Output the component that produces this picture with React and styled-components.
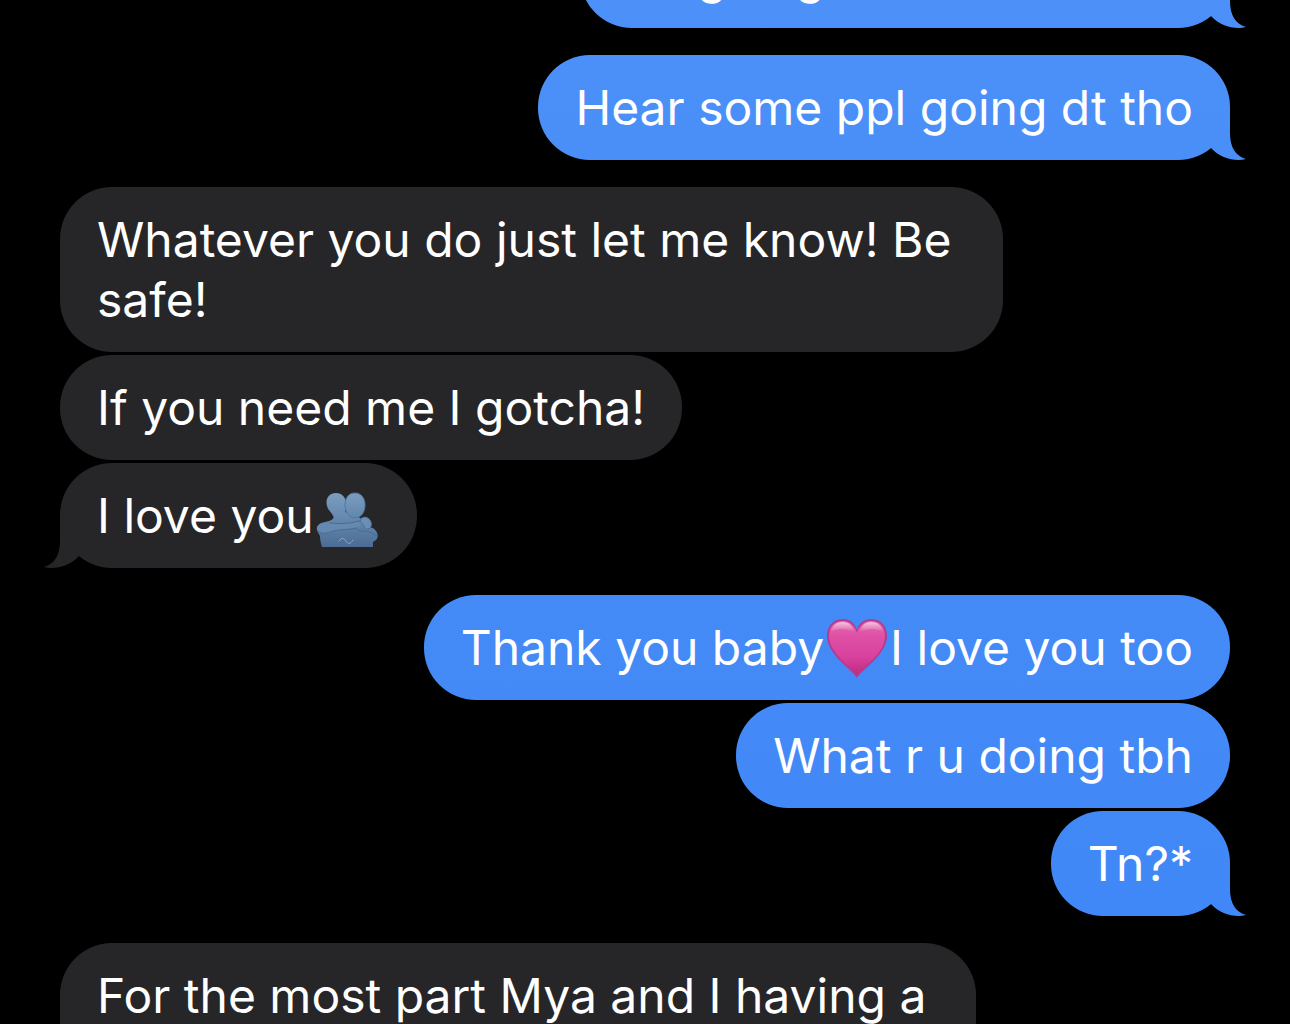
import React from "react";
import styled, { createGlobalStyle, css } from "styled-components";

const GlobalStyle = createGlobalStyle`
  *, *::before, *::after { box-sizing: border-box; }
  body {
    margin: 0;
    background: #000;
    overflow: hidden;
  }
`;

const Conversation = styled.main`
  display: flex;
  flex-direction: column;
  gap: 27px;
  height: 100vh;
  overflow: hidden;
  padding: 0 60px;
  background: #000;
  color: #fff;
  font-family: Inter, "Liberation Sans", sans-serif;
  font-size: 48px;
  font-weight: 400;
  line-height: 60px;
`;

const Group = styled.section`
  display: flex;
  flex: none;
  flex-direction: column;
  align-items: ${(p) => (p.$sent ? "flex-end" : "flex-start")};
  gap: 3px;
  margin-top: ${(p) => (p.$scrolled ? "-77px" : "0")};
`;

const sentFill = css`
  background: linear-gradient(#4c90f8, #3f87f7) fixed;
`;

const receivedFill = css`
  background: #262628;
`;

const Bubble = styled.p`
  position: relative;
  flex: none;
  margin: 0;
  max-width: min(100%, ${(p) => (p.$narrow ? "916px" : "943px")});
  padding: 23px 37px 22px;
  border-radius: 52px;
  ${(p) => (p.$sent ? sentFill : receivedFill)}
`;

const Tail = styled.span`
  position: absolute;
  bottom: 0;
  width: 50px;
  height: 54px;
  clip-path: path("M34 0V27C34 42 40 50 50 53C39 56 24 52 15 42L6 30Z");
  ${(p) =>
    p.$sent
      ? css`
          right: -16px;
          ${sentFill}
        `
      : css`
          left: -16px;
          transform: scaleX(-1);
          ${receivedFill}
        `}
`;

const Emoji = styled.svg`
  display: inline-block;
  width: 62px;
  height: 60px;
  margin: 0 2px;
  overflow: visible;
  vertical-align: top;
`;

function Heart() {
  return (
    <Emoji viewBox="0 0 62 60" role="img" aria-label="pink heart">
      <defs>
        <linearGradient id="heartFill" x1="0" y1="0" x2="0" y2="1">
          <stop offset="0" stopColor="#e46cb0" />
          <stop offset=".28" stopColor="#de50a5" />
          <stop offset=".65" stopColor="#d9429f" />
          <stop offset="1" stopColor="#c02a80" />
        </linearGradient>
        <linearGradient id="heartShine" x1="0" y1="0" x2="0" y2="1">
          <stop offset="0" stopColor="#fff" stopOpacity=".6" />
          <stop offset="1" stopColor="#fff" stopOpacity="0" />
        </linearGradient>
      </defs>
      <path d="M31 60C27 52 1 37 1 18C1 7 8 1 17 1C24 1 29 5 31 12C33 5 38 1 45 1C54 1 61 7 61 18C61 37 35 52 31 60Z" fill="#b53a90" />
      <path d="M31 57C27 50 3 36 3 18C3 8 9 3 17 3C24 3 29 8 31 15C33 8 38 3 45 3C53 3 59 8 59 18C59 36 35 50 31 57Z" fill="url(#heartFill)" />
      <path d="M5 14C6 7 11 4 17 4C23 4 27 8 28 14C20 10 12 10 5 14Z" fill="url(#heartShine)" />
      <path d="M34 14C35 8 39 4 45 4C51 4 56 7 57 14C50 10 42 10 34 14Z" fill="url(#heartShine)" />
    </Emoji>
  );
}

function Hug() {
  return (
    <Emoji viewBox="0 0 62 60" role="img" aria-label="people hugging">
      <defs>
        <linearGradient id="hugHead" x1="0" y1="0" x2="0" y2="1">
          <stop offset="0" stopColor="#7c9dbf" />
          <stop offset="1" stopColor="#6186ae" />
        </linearGradient>
        <linearGradient id="hugBody" x1="0" y1="0" x2="0" y2="1">
          <stop offset="0" stopColor="#6c90b6" />
          <stop offset="1" stopColor="#4c6b92" />
        </linearGradient>
      </defs>
      <path d="M18 28C19 33 15 35 9 36C3 37 0 40 1 44C2 47 3 48 4 50C4 54 5 58 6 61H57V56C62 54 63 49 60 45C58 42 55 41 53 41L48 34L40 30L29 26Z" fill="url(#hugBody)" />
      <path d="M20 7C13 7 9 13 11 20C12 25 18 28 18 33C20 37 27 36 29 32L30 18C30 11 26 7 20 7Z" fill="url(#hugHead)" />
      <path d="M39 7C32 7 29 13 29 19C29 26 33 32 39 32C45 32 49 26 49 19C49 12 45 7 39 7Z" fill="url(#hugHead)" stroke="#547aa3" strokeWidth="1" />
      <path d="M1 42C2 37 8 37 14 37C23 38 31 38 42 35C44 35 46 36 46 37C45 39 42 40 40 42C29 44 20 44 11 47C5 48 1 46 1 42Z" fill="#6689b0" />
      <path d="M44 35C44 31 51 29 54 34C57 38 55 43 51 43C48 43 47 40 46 37Z" fill="#6c8fb5" />
      <path d="M2 45C5 49 11 47 17 45C25 43 34 44 40 42M14 37C24 38 33 38 42 35C45 35 48 38 49 43M44 35C45 30 51 30 54 34C57 39 55 43 51 43M40 42C43 47 48 44 53 46C57 47 59 49 61 50" fill="none" stroke="#486c94" strokeWidth="1" strokeLinecap="round" />
      <path d="M23 55C26 51 28 52 30 55S34 59 37 54" fill="none" stroke="#89a6c5" strokeWidth="1" strokeLinecap="round" />
    </Emoji>
  );
}

function Message({ sent, tail, narrow, children }) {
  return (
    <Bubble $sent={sent} $narrow={narrow}>
      {tail && <Tail $sent={sent} aria-hidden="true" />}
      {children}
    </Bubble>
  );
}

export default function App() {
  return (
    <>
      <GlobalStyle />
      <Conversation>
        <Group $sent $scrolled>
          <Message sent tail>I’m going to be there now</Message>
        </Group>
        <Group $sent>
          <Message sent tail>Hear some ppl going dt tho</Message>
        </Group>
        <Group>
          <Message>Whatever you do just let me know! Be safe!</Message>
          <Message>If you need me I gotcha!</Message>
          <Message tail>I love you<Hug /></Message>
        </Group>
        <Group $sent>
          <Message sent>Thank you baby<Heart />I love you too</Message>
          <Message sent>What r u doing tbh</Message>
          <Message sent tail>Tn?*</Message>
        </Group>
        <Group>
          <Message narrow>For the most part Mya and I having a good night</Message>
        </Group>
      </Conversation>
    </>
  );
}
